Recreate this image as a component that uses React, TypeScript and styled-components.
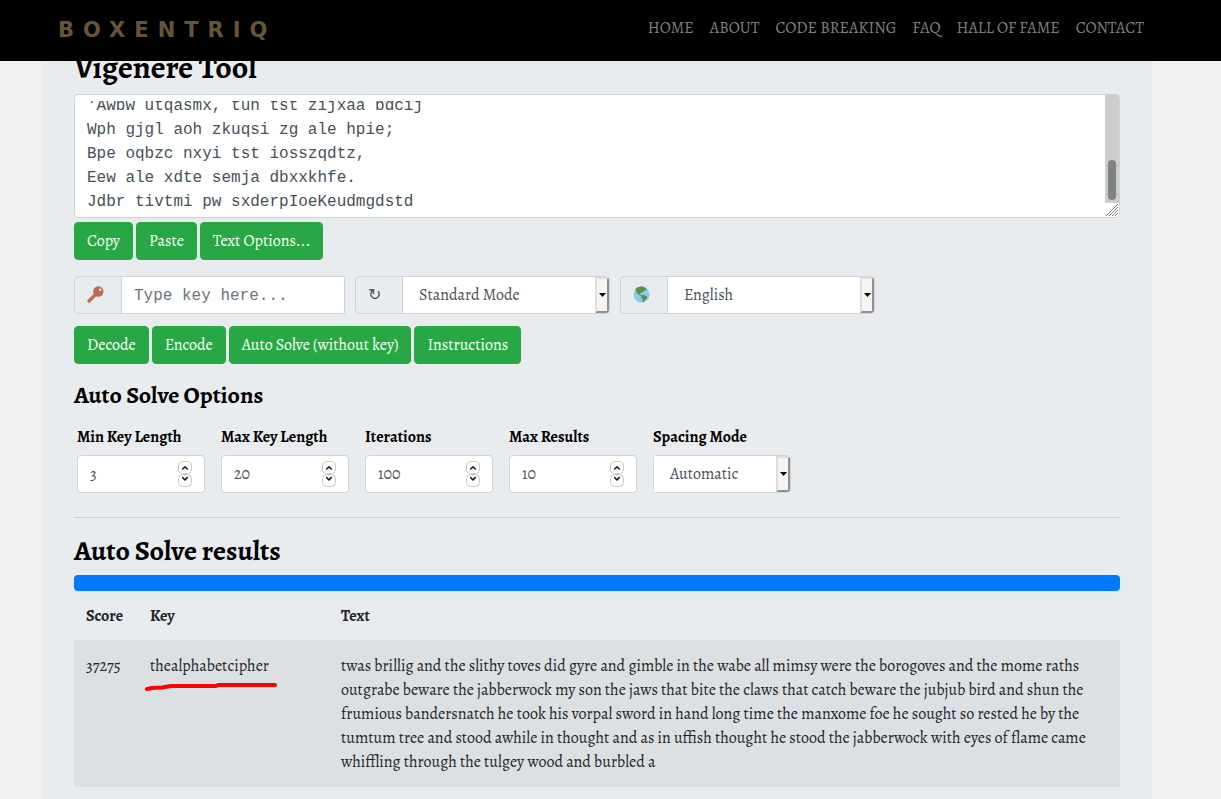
import React, { useEffect, useRef } from "react";
import styled, { createGlobalStyle } from "styled-components";

const serif = `Alegreya, "Liberation Serif", serif`;
const mono = `"Liberation Mono", monospace`;
const line = "#ced4da";

const GlobalStyle = createGlobalStyle`
  *, *::before, *::after { box-sizing: border-box; }
  body {
    margin: 0;
    background: #f0f0f0;
    color: #212529;
    font: 16px/24px ${serif};
  }
`;

const Header = styled.header`
  position: fixed;
  inset: 0 0 auto 0;
  z-index: 10;
  height: 61px;
  padding: 0 77px 6px 58px;
  display: flex;
  align-items: center;
  justify-content: space-between;
  background: #000;
`;

const Brand = styled.a`
  color: #675339;
  font: bold 21px/24px "DejaVu Sans", sans-serif;
  letter-spacing: 9px;
  text-decoration: none;
  padding-top: 4px;
`;

const Nav = styled.nav`
  display: flex;
  gap: 16px;
`;

const NavLink = styled.a`
  color: #808080;
  font-size: 16px;
  text-decoration: none;
  text-transform: uppercase;
  white-space: nowrap;
`;

const Page = styled.main`
  margin: 0 69px 0 42px;
  padding: 50px 32px 0;
  min-height: 100vh;
  background: #e8ecef;
`;

const Title = styled.h1`
  margin: 0 0 10px;
  color: #000;
  font-size: 32px;
  line-height: 34px;
`;

const OptionsTitle = styled.h2`
  margin: 17px 0 16px;
  color: #000;
  font-size: 24px;
  line-height: 28px;
`;

const ResultsTitle = styled.h2`
  margin: 0 0 8px;
  color: #000;
  font-size: 28px;
  line-height: 32px;
`;

const MessageBox = styled.div`
  display: flex;
  height: 124px;
  border: 1px solid ${line};
  border-radius: 4px;
  background: #fff;
  overflow: hidden;
`;

const Message = styled.textarea`
  flex: 1;
  height: 113px;
  margin: 6px 12px 0;
  padding: 0;
  border: 0;
  outline: 0;
  resize: none;
  overflow: hidden;
  background: transparent;
  color: #495057;
  font: 16px/24px ${mono};
`;

const ScrollTrack = styled.div`
  width: 14px;
  display: flex;
  flex-direction: column;
  background: #cdcdcd;
`;

const ScrollThumb = styled.div`
  width: 8px;
  height: 40px;
  margin: auto 3px 3px;
  border-radius: 4px;
  background: #7e8382;
`;

const Grip = styled.svg`
  display: block;
  background: #fff;
`;

const ButtonRow = styled.div<{ $top: number }>`
  display: flex;
  gap: 3px;
  margin-top: ${(p) => p.$top}px;
`;

const Button = styled.button`
  height: 38px;
  padding: 0 12px;
  border: 1px solid #28a745;
  border-radius: 4px;
  background: #28a745;
  color: #fff;
  font: 16px/24px ${serif};
  white-space: nowrap;
`;

const Settings = styled.div`
  display: flex;
  gap: 10px;
  margin-top: 16px;
`;

const Group = styled.div<{ $width: number; $openEnd?: boolean }>`
  display: flex;
  width: ${(p) => p.$width}px;
  height: 38px;
  border: 1px solid ${line};
  border-radius: ${(p) => (p.$openEnd ? "4px 0 0 4px" : "4px")};
`;

const Addon = styled.label`
  display: flex;
  align-items: center;
  width: 47px;
  padding: 0 0 1px 12px;
  border-right: 1px solid ${line};
  color: #495057;
  font: 16px/24px "DejaVu Sans", sans-serif;
`;

const KeyInput = styled.input`
  flex: 1;
  min-width: 0;
  padding: 1px 12px 0;
  border: 0;
  background: #fff;
  color: #495057;
  font: 16px/24px ${mono};
  &::placeholder { color: #6c757d; opacity: 1; }
`;

const SelectBox = styled.div`
  position: relative;
  flex: 1;
  display: flex;
  border-radius: 0 3px 3px 0;
  background: #fff;
`;

const Select = styled.select`
  flex: 1;
  min-width: 0;
  appearance: none;
  padding: 0 16px;
  border: 0;
  border-radius: 3px;
  background: transparent;
  color: #495057;
  font: 16px/24px ${serif};
`;

const SelectArrow = styled.span`
  position: absolute;
  inset: 0 0 0 auto;
  width: 14px;
  display: flex;
  align-items: center;
  justify-content: center;
  border: 2px solid;
  border-color: #dedede #919191 #919191 #dedede;
  border-radius: 0 3px 3px 0;
  background: #f6f5f4;
  pointer-events: none;
`;

const Options = styled.div`
  display: flex;
  gap: 16px;
  margin: 0 3px 24px;
`;

const Field = styled.div<{ $width: number }>`
  width: ${(p) => p.$width}px;
`;

const FieldLabel = styled.label`
  display: block;
  margin-bottom: 6px;
  color: #000;
  font-weight: bold;
  white-space: nowrap;
`;

const FieldBox = styled.div`
  display: flex;
  align-items: center;
  height: 38px;
  padding-right: 12px;
  border: 1px solid ${line};
  border-radius: 4px;
  background: #fff;
`;

const NumberInput = styled.input`
  flex: 1;
  min-width: 0;
  padding: 0 0 0 12px;
  border: 0;
  background: transparent;
  appearance: textfield;
  color: #495057;
  font: 16px/24px ${serif};
  &::-webkit-inner-spin-button { appearance: none; margin: 0; }
`;

const Divider = styled.hr`
  margin: 0 0 17px;
  border: 0;
  border-top: 1px solid #cfd2d5;
`;

const Progress = styled.div`
  height: 16px;
  border-radius: 4px;
  background: #007bff;
`;

const Table = styled.table`
  width: 100%;
  border-collapse: collapse;
  table-layout: fixed;
`;

const Cell = styled.td`
  padding: 14px 12px 13px;
  background: #dce0e3;
  vertical-align: top;
`;

const HeadCell = styled.th<{ $width?: number }>`
  width: ${(p) => (p.$width ? p.$width + "px" : "auto")};
  padding: 12px;
  border-top: 1px solid #dee2e6;
  text-align: left;
`;

const Marked = styled.span`
  position: relative;
`;

const Underline = styled.svg`
  position: absolute;
  left: -6px;
  top: 27px;
  overflow: visible;
`;

const KeyIcon = () => (
  <svg width="17" height="17" viewBox="0 0 17 17" aria-hidden="true">
    <path d="M2 15 L9 8" stroke="#c1694f" strokeWidth="3.2" strokeLinecap="round" />
    <circle cx="11.3" cy="5.5" r="5.2" fill="#c1694f" />
    <circle cx="13.2" cy="3.8" r="1.2" fill="#e8ecef" />
  </svg>
);

const GlobeIcon = () => (
  <svg width="17" height="17" viewBox="0 0 17 17" aria-hidden="true">
    <circle cx="8.5" cy="8.5" r="8" fill="#88c9f9" />
    <path
      fill="#5c913b"
      d="M2.4 3.4 C4 1.2 7 .3 9.5 .6 L12.2 1.2 11.2 2.2 13.8 2.2 13.2 3.8 11.2 4.8 9.9 6.2 8.2 6.4 7 7.3 7.6 8.8 9.4 9.4 8.6 10.2 6.2 9.1 4.1 7.4 3.4 5.4z"
    />
    <path fill="#5c913b" d="M8.6 9.6 L11 9 14 10.6 13.7 12.4 12 13.8 10.8 16.2 9.7 16 9.8 13.2 8 11.4z" />
  </svg>
);

const Spinner = () => (
  <svg width="14" height="26" viewBox="0 0 14 26" fill="none" aria-hidden="true">
    <rect x=".5" y=".5" width="13" height="12" rx="4" stroke="#cdc7c2" />
    <rect x=".5" y="13.5" width="13" height="12" rx="4" stroke="#cdc7c2" />
    <path d="M4.2 8.5 L7 5.9 9.8 8.5 M4.2 16.2 L7 18.8 9.8 16.2" stroke="#222" strokeWidth="1.6" />
  </svg>
);

const Dropdown = ({ id, value }: { id: string; value: string }) => (
  <SelectBox>
    <Select id={id} defaultValue={value}>
      <option>{value}</option>
    </Select>
    <SelectArrow>
      <svg width="7" height="4" viewBox="0 0 7 4" aria-hidden="true">
        <path d="M0 0h7L3.5 4z" />
      </svg>
    </SelectArrow>
  </SelectBox>
);

const navItems = ["Home", "About", "Code Breaking", "FAQ", "Hall of Fame", "Contact"];

const numberFields = [
  { id: "min-key", label: "Min Key Length", value: 3 },
  { id: "max-key", label: "Max Key Length", value: 20 },
  { id: "iterations", label: "Iterations", value: 100 },
  { id: "max-results", label: "Max Results", value: 10 },
];

const cipherText = `'Awbw utqasmx, tuh tst zijxaa bdcij
Wph gjgl aoh zkuqsi zg ale hpie;
Bpe oqbzc nxyi tst iosszqdtz,
Eew ale xdte semja dbxxkhfe.
Jdbr tivtmi pw sxderpIoeKeudmgdstd`;

export default function App() {
  const message = useRef<HTMLTextAreaElement>(null);

  useEffect(() => {
    if (message.current) message.current.scrollTop = message.current.scrollHeight;
  }, []);

  return (
    <>
      <GlobalStyle />
      <Header>
        <Brand href="#">BOXENTRIQ</Brand>
        <Nav>
          {navItems.map((item) => (
            <NavLink href="#" key={item}>{item}</NavLink>
          ))}
        </Nav>
      </Header>
      <Page>
        <Title>Vigenere Tool</Title>
        <MessageBox>
          <Message ref={message} aria-label="Message" defaultValue={cipherText} />
          <ScrollTrack>
            <ScrollThumb />
            <Grip width="14" height="14" viewBox="0 0 14 14" aria-hidden="true">
              <path d="M1 13 L13 1 M4 13 L13 4 M7 13 L13 7 M10 13 L13 10" stroke="#777" strokeWidth="1" />
            </Grip>
          </ScrollTrack>
        </MessageBox>
        <ButtonRow $top={4}>
          <Button>Copy</Button>
          <Button>Paste</Button>
          <Button>Text Options...</Button>
        </ButtonRow>
        <Settings>
          <Group $width={271} $openEnd>
            <Addon htmlFor="key" aria-label="Key"><KeyIcon /></Addon>
            <KeyInput id="key" placeholder="Type key here..." />
          </Group>
          <Group $width={255}>
            <Addon htmlFor="mode" aria-label="Mode">↻</Addon>
            <Dropdown id="mode" value="Standard Mode" />
          </Group>
          <Group $width={255}>
            <Addon htmlFor="language" aria-label="Language"><GlobeIcon /></Addon>
            <Dropdown id="language" value="English" />
          </Group>
        </Settings>
        <ButtonRow $top={12}>
          <Button>Decode</Button>
          <Button>Encode</Button>
          <Button>Auto Solve (without key)</Button>
          <Button>Instructions</Button>
        </ButtonRow>
        <OptionsTitle>Auto Solve Options</OptionsTitle>
        <Options>
          {numberFields.map((field) => (
            <Field $width={128} key={field.id}>
              <FieldLabel htmlFor={field.id}>{field.label}</FieldLabel>
              <FieldBox>
                <NumberInput id={field.id} type="number" defaultValue={field.value} />
                <Spinner />
              </FieldBox>
            </Field>
          ))}
          <Field $width={138}>
            <FieldLabel htmlFor="spacing">Spacing Mode</FieldLabel>
            <Group $width={138}>
              <Dropdown id="spacing" value="Automatic" />
            </Group>
          </Field>
        </Options>
        <Divider />
        <ResultsTitle>Auto Solve results</ResultsTitle>
        <Progress role="progressbar" aria-label="Auto Solve progress" aria-valuenow={100} />
        <Table>
          <thead>
            <tr>
              <HeadCell $width={64}>Score</HeadCell>
              <HeadCell $width={191}>Key</HeadCell>
              <HeadCell>Text</HeadCell>
            </tr>
          </thead>
          <tbody>
            <tr>
              <Cell>37275</Cell>
              <Cell>
                <Marked>
                  thealphabetcipher
                  <Underline width="134" height="10" viewBox="0 0 134 10" fill="none" aria-hidden="true">
                    <path
                      d="M3 7 L8 6 18 5.5 27 4 72 4 74 3 131 3"
                      stroke="#fe0000"
                      strokeWidth="4"
                      strokeLinecap="round"
                      strokeLinejoin="round"
                    />
                  </Underline>
                </Marked>
              </Cell>
              <Cell>
                twas brillig and the slithy toves did gyre and gimble in the wabe all mimsy were the borogoves and the
                mome raths outgrabe beware the jabberwock my son the jaws that bite the claws that catch beware the
                jubjub bird and shun the frumious bandersnatch he took his vorpal sword in hand long time the manxome
                foe he sought so rested he by the tumtum tree and stood awhile in thought and as in uffish thought he
                stood the jabberwock with eyes of flame came whiffling through the tulgey wood and burbled a
              </Cell>
            </tr>
          </tbody>
        </Table>
      </Page>
    </>
  );
}
